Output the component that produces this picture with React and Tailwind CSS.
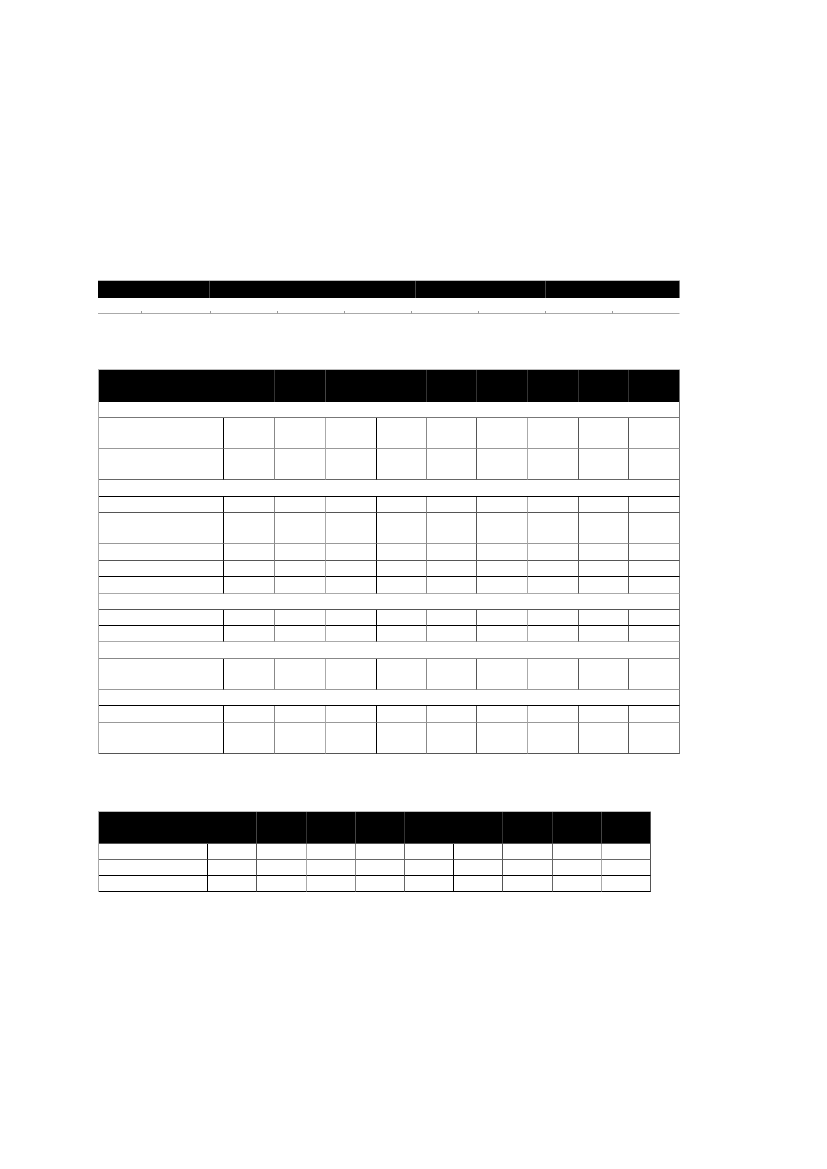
import React from 'react';

// Top strip: header groups and the thin ruled row under it
const T1_HEAD = [
    { w: 'w-[112px]', b: 'border-r-[#444]' },
    { w: 'w-[206px]', b: 'border-r-[#444]' },
    { w: 'w-[130px]', b: 'border-r-[#444]' },
    { w: 'w-[134px]', b: 'border-r-[#777]' },
];
const T1_COLS = ['w-[44px]', 'w-[69px]', 'w-[67px]', 'w-[67px]', 'w-[67px]', 'w-[67px]', 'w-[67px]', 'w-[67px]', 'w-[67px]'];

// Main table
const T2_COLS = [
    { w: 'w-[125px]', b: 'border-r-black' },
    { w: 'w-[51px]', b: 'border-r-[#888]' },
    { w: 'w-[51px]', b: 'border-r-[#aaa]' },
    { w: 'w-[51px]', b: 'border-r-black' },
    { w: 'w-[50px]', b: 'border-r-[#888]' },
    { w: 'w-[50px]', b: 'border-r-[#555]' },
    { w: 'w-[51px]', b: 'border-r-[#aaa]' },
    { w: 'w-[51px]', b: 'border-r-[#555]' },
    { w: 'w-[50px]', b: 'border-r-[#555]' },
    { w: 'w-[51px]', b: 'border-r-[#777]' },
];
const T2_HEAD = [
    { w: 'w-[176px]', b: 'border-r-[#333]' },
    { w: 'w-[51px]', b: 'border-r-[#444]' },
    { w: 'w-[101px]', b: 'border-r-[#333]' },
    { w: 'w-[50px]', b: 'border-r-[#333]' },
    { w: 'w-[51px]', b: 'border-r-[#333]' },
    { w: 'w-[51px]', b: 'border-r-[#333]' },
    { w: 'w-[50px]', b: 'border-r-[#333]' },
    { w: 'w-[51px]', b: 'border-r-[#777]' },
];
const T2_ROWS = [
    { section: true, h: 'h-[16px]', b: 'border-b-[#777]' },
    { h: 'h-[31px]', b: 'border-b-[#999]' },
    { h: 'h-[31px]', b: 'border-b-[#666]' },
    { section: true, h: 'h-[17px]', b: 'border-b-black' },
    { h: 'h-[16px]', b: 'border-b-[#555]' },
    { h: 'h-[31px]', b: 'border-b-[#999]' },
    { h: 'h-[17px]', b: 'border-b-[#555]' },
    { h: 'h-[16px]', b: 'border-b-black' },
    { h: 'h-[17px]', b: 'border-b-[#aaa]' },
    { section: true, h: 'h-[16px]', b: 'border-b-[#555]' },
    { h: 'h-[16px]', b: 'border-b-black' },
    { h: 'h-[16px]', b: 'border-b-[#aaa]' },
    { section: true, h: 'h-[17px]', b: 'border-b-[#888]' },
    { h: 'h-[31px]', b: 'border-b-[#999]' },
    { section: true, h: 'h-[16px]', b: 'border-b-black' },
    { h: 'h-[17px]', b: 'border-b-[#999]' },
    { h: 'h-[31px]', b: 'border-b-[#555]' },
];

// Bottom table
const T3_COLS = [
    { w: 'w-[109px]', b: 'border-r-black' },
    { w: 'w-[49px]', b: 'border-r-[#555]' },
    { w: 'w-[50px]', b: 'border-r-[#aaa]' },
    { w: 'w-[49px]', b: 'border-r-[#888]' },
    { w: 'w-[49px]', b: 'border-r-[#666]' },
    { w: 'w-[49px]', b: 'border-r-black' },
    { w: 'w-[49px]', b: 'border-r-[#555]' },
    { w: 'w-[50px]', b: 'border-r-[#666]' },
    { w: 'w-[49px]', b: 'border-r-[#aaa]' },
    { w: 'w-[49px]', b: 'border-r-[#555]' },
];
const T3_HEAD = [
    { w: 'w-[158px]', b: 'border-r-[#444]' },
    { w: 'w-[50px]', b: 'border-r-[#333]' },
    { w: 'w-[49px]', b: 'border-r-[#444]' },
    { w: 'w-[49px]', b: 'border-r-[#333]' },
    { w: 'w-[98px]', b: 'border-r-[#333]' },
    { w: 'w-[50px]', b: 'border-r-[#333]' },
    { w: 'w-[49px]', b: 'border-r-[#444]' },
    { w: 'w-[49px]', b: 'border-r-[#555]' },
];
const T3_ROWS = [
    { h: 'h-[16px]', b: 'border-b-[#666]' },
    { h: 'h-[16px]', b: 'border-b-black' },
    { h: 'h-[16px]', b: 'border-b-black' },
];

function HeaderRow({ cells, height, bottom = '' }) {
    return (
        <div className={`flex ${bottom}`}>
            {cells.map((c, i) => (
                <div key={i} className={`shrink-0 bg-black border-r ${c.w} ${c.b} ${height}`} />
            ))}
        </div>
    );
}

function BodyRow({ row, cols, fullWidth, sectionRight }) {
    if (row.section) {
        return (
            <div className={`shrink-0 bg-white border-r border-b ${fullWidth} ${row.h} ${sectionRight} ${row.b}`} />
        );
    }
    return (
        <div className="flex">
            {cols.map((c, i) => (
                <div key={i} className={`shrink-0 bg-white border-r border-b ${c.w} ${c.b} ${row.h} ${row.b}`} />
            ))}
        </div>
    );
}

export default function App() {
    return (
        <div className="min-h-[1169px] w-[827px] bg-white pt-[280px] pl-[98px]">
            {/* Strip */}
            <div className="w-[582px]">
                <div className="flex border-t border-t-[#bbb]">
                    {T1_HEAD.map((c, i) => (
                        <div key={i} className={`shrink-0 bg-black border-r h-[17px] ${c.w} ${c.b}`} />
                    ))}
                </div>
                <div className="h-[13px]" />
                <div className="flex">
                    {T1_COLS.map((w, i) => (
                        <div
                            key={i}
                            className={`shrink-0 h-[3px] border-b border-b-[#aaa] border-r ${w} ${i === T1_COLS.length - 1 ? 'border-r-transparent' : 'border-r-[#999]'}`}
                        />
                    ))}
                </div>
            </div>

            {/* Main table */}
            <div className="mt-[55px] w-[582px] border-l border-t border-l-[#aaa] border-t-[#bbb]">
                <HeaderRow cells={T2_HEAD} height="h-[32px]" />
                {T2_ROWS.map((row, i) => (
                    <BodyRow key={i} row={row} cols={T2_COLS} fullWidth="w-[581px]" sectionRight="border-r-[#777]" />
                ))}
            </div>

            {/* Bottom table */}
            <div className="mt-[57px] w-[553px] border-l border-t border-l-[#aaa] border-t-[#bbb]">
                <HeaderRow cells={T3_HEAD} height="h-[31px]" bottom="border-b border-b-[#555]" />
                {T3_ROWS.map((row, i) => (
                    <BodyRow key={i} row={row} cols={T3_COLS} fullWidth="w-[552px]" sectionRight="border-r-[#555]" />
                ))}
            </div>
        </div>
    );
}
